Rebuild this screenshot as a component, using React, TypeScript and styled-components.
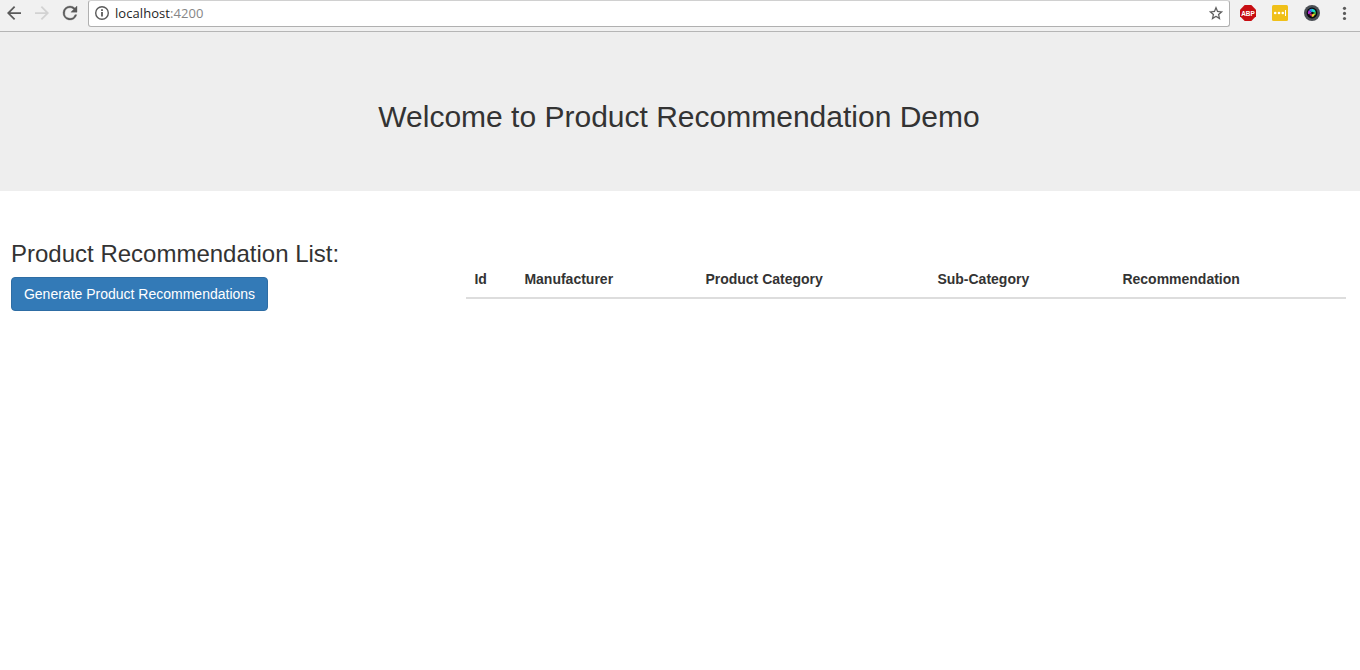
import React from "react";
import styled, { createGlobalStyle } from "styled-components";

const GlobalStyle = createGlobalStyle`
  * { box-sizing: border-box; }
  body {
    margin: 0;
    background: #fff;
    color: #333;
    font: 14px/20px "Liberation Sans", Arial, sans-serif;
  }
`;

const Toolbar = styled.header`
  display: flex;
  height: 32px;
  padding: 0 8px 5px 7px;
  background: #f1f1f1;
  border-bottom: 1px solid #b5b5b5;
`;

const NavButtons = styled.nav`
  display: flex;
  align-items: center;
  gap: 14px;
  width: 81px;
`;

const AddressBar = styled.div`
  display: flex;
  flex: 1;
  align-items: center;
  height: 27px;
  padding: 0 6px 1px;
  background: #fff;
  border: 1px solid #b0b0b0;
  border-top-color: #d0d0d0;
  border-radius: 3px;
`;

const Url = styled.span`
  flex: 1;
  margin-left: 6px;
  color: #1f1f1f;
  font: 13px/20px "Open Sans", "Noto Sans", sans-serif;
  letter-spacing: 0.06px;
`;

const Port = styled.span`
  color: #868686;
`;

const Extensions = styled.div`
  display: flex;
  align-items: center;
  gap: 16px;
  width: 122px;
  padding-left: 10px;
`;

const Icon = styled.svg<{ $size?: number; $tint?: string }>`
  display: block;
  flex: none;
  width: ${(p) => p.$size ?? 14}px;
  height: ${(p) => p.$size ?? 14}px;
  overflow: visible;
  fill: ${(p) => p.$tint ?? "#5a5a5a"};
`;

const Jumbotron = styled.section`
  height: 159px;
  padding-top: 68px;
  background: #eee;
  text-align: center;
`;

const Title = styled.h1`
  margin: 0;
  padding-right: 2px;
  font-size: 30px;
  font-weight: 400;
  line-height: 33px;
`;

const Content = styled.main`
  display: grid;
  grid-template-columns: 455px 880px;
  align-items: start;
  padding: 50px 0 0 11px;
`;

const ListTitle = styled.h2`
  margin: 0 0 10px;
  font-size: 24px;
  font-weight: 400;
  line-height: 26px;
`;

const PrimaryButton = styled.button`
  width: 257px;
  height: 34px;
  padding: 0;
  background: #337ab7;
  border: 1px solid #2e6da4;
  border-radius: 4px;
  color: #fff;
  font: 14px/20px "Liberation Sans", Arial, sans-serif;
  white-space: nowrap;
`;

const Table = styled.table`
  width: 880px;
  margin-top: 20px;
  border-collapse: collapse;
  table-layout: fixed;
`;

const HeadCell = styled.th<{ $width: number }>`
  width: ${(p) => p.$width}px;
  padding: 8px 8px 8px 8.4px;
  border-bottom: 2px solid #ddd;
  font-weight: 700;
  text-align: left;
  vertical-align: bottom;
`;

const columns = [
  { label: "Id", width: 50 },
  { label: "Manufacturer", width: 181 },
  { label: "Product Category", width: 232 },
  { label: "Sub-Category", width: 185 },
  { label: "Recommendation", width: 232 },
];

const BackIcon = () => (
  <Icon viewBox="4 4 16 16">
    <path d="M20 11H7.83l5.59-5.59L12 4l-8 8 8 8 1.41-1.41L7.83 13H20z" />
  </Icon>
);

const ForwardIcon = () => (
  <Icon viewBox="4 4 16 16" $tint="#d2d2d2">
    <path d="M12 4l-1.41 1.41L16.17 11H4v2h12.17l-5.58 5.59L12 20l8-8z" />
  </Icon>
);

const ReloadIcon = () => (
  <Icon viewBox="4 4 16 16">
    <path
      stroke="#5a5a5a"
      strokeWidth="0.4"
      d="M17.65 6.35A7.96 7.96 0 0 0 12 4a8 8 0 1 0 7.73 10h-2.08A6 6 0 1 1 12 6c1.66 0 3.14.69 4.22 1.78L13 11h7V4z"
    />
  </Icon>
);

const InfoIcon = () => (
  <Icon viewBox="2 2 20 20">
    <path d="M12 2a10 10 0 1 0 0 20 10 10 0 0 0 0-20zm0 18a8 8 0 1 1 0-16 8 8 0 0 1 0 16z" />
    <path d="M10.7 6.8h2.6v2.3h-2.6zM10.7 10.6h2.6V17h-2.6z" />
  </Icon>
);

const StarIcon = () => (
  <Icon viewBox="2 1.5 20 20">
    <path
      stroke="#5a5a5a"
      strokeWidth="0.2"
      d="M22 9.24l-7.19-.62L12 2 9.19 8.63 2 9.24l5.46 4.73L5.82 21 12 17.27 18.18 21l-1.63-7.03zM12 15.4l-3.76 2.27 1-4.28-3.32-2.88 4.38-.38L12 6.1l1.71 4.04 4.38.38-3.32 2.88 1 4.28z"
    />
  </Icon>
);

const AdblockIcon = () => (
  <Icon viewBox="0 0 16 16" $size={16} $tint="#c70d12">
    <path d="M4.7 0h6.6L16 4.7v6.6L11.3 16H4.7L0 11.3V4.7z" />
    <text
      x="1.2"
      y="11"
      textLength="13.6"
      lengthAdjust="spacingAndGlyphs"
      fill="#fff"
      fontFamily="Liberation Sans, sans-serif"
      fontSize="8"
      fontWeight="700"
    >
      ABP
    </text>
  </Icon>
);

const PasswordIcon = () => (
  <Icon viewBox="0 0 16 16" $size={16} $tint="#f0c019">
    <rect width="16" height="16" rx="1.5" />
    <g fill="#fff">
      <circle cx="3.2" cy="8" r="1.3" />
      <circle cx="7" cy="8" r="1.3" />
      <circle cx="10.8" cy="8" r="1.3" />
      <rect x="13" y="5" width="1" height="6" />
    </g>
  </Icon>
);

const LensIcon = () => (
  <Icon viewBox="0 0 16 16" $size={16}>
    <circle cx="8" cy="8" r="8" fill="#4b4f55" />
    <circle cx="8" cy="8" r="5.4" fill="#090a0f" />
    <path d="M8 8L4 9.2A4.2 4.2 0 0 1 5 5z" fill="#b02ad0" />
    <path d="M8 8L5 5A4.2 4.2 0 0 1 8 3.8z" fill="#2b8cf0" />
    <path d="M8 8V3.8A4.2 4.2 0 0 1 11.8 6.4z" fill="#17dfd0" />
    <path d="M8 8L11.8 6.4A4.2 4.2 0 0 1 11.4 10z" fill="#3fae3c" />
    <path d="M8 8L11.2 9.6L9 11.9L7.6 11.4z" fill="#efd52a" />
    <path d="M8 8L7.8 11.4L5.2 9.8z" fill="#d92b65" />
    <circle cx="8.4" cy="8" r="1.2" fill="#090a0f" />
  </Icon>
);

const MenuIcon = () => (
  <Icon viewBox="0 0 16 16" $size={16}>
    <circle cx="8.5" cy="3.3" r="1.6" />
    <circle cx="8.5" cy="8.4" r="1.6" />
    <circle cx="8.5" cy="13.5" r="1.6" />
  </Icon>
);

export default function App() {
  return (
    <>
      <GlobalStyle />
      <Toolbar>
        <NavButtons>
          <BackIcon />
          <ForwardIcon />
          <ReloadIcon />
        </NavButtons>
        <AddressBar>
          <InfoIcon />
          <Url>
            localhost<Port>:4200</Port>
          </Url>
          <StarIcon />
        </AddressBar>
        <Extensions>
          <AdblockIcon />
          <PasswordIcon />
          <LensIcon />
          <MenuIcon />
        </Extensions>
      </Toolbar>
      <Jumbotron>
        <Title>Welcome to Product Recommendation Demo</Title>
      </Jumbotron>
      <Content>
        <section>
          <ListTitle>Product Recommendation List:</ListTitle>
          <PrimaryButton type="button">Generate Product Recommendations</PrimaryButton>
        </section>
        <Table>
          <thead>
            <tr>
              {columns.map((c) => (
                <HeadCell key={c.label} $width={c.width}>
                  {c.label}
                </HeadCell>
              ))}
            </tr>
          </thead>
        </Table>
      </Content>
    </>
  );
}
